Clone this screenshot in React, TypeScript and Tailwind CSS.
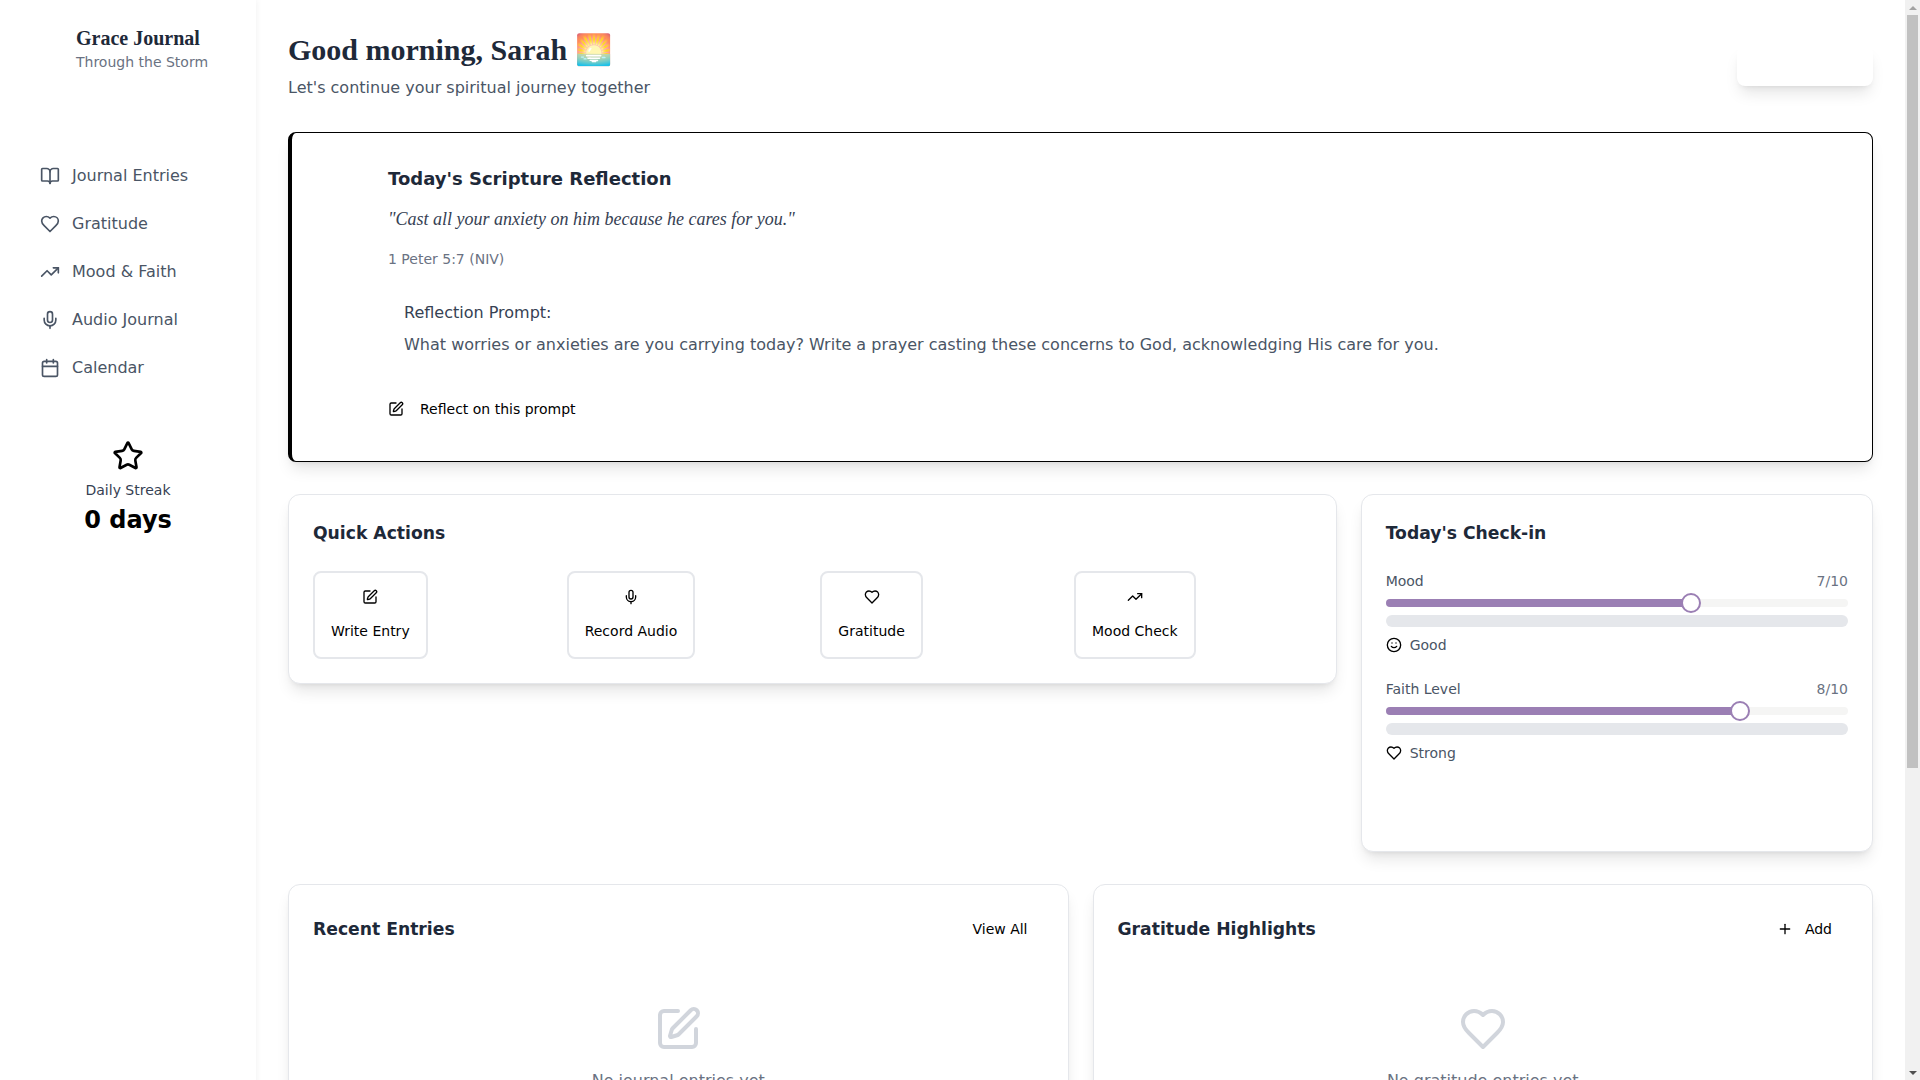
import * as Slider from "@radix-ui/react-slider";
import { BookOpen, Calendar, Mic, Plus, Smile, SquarePen, Star, TrendingUp } from "lucide-react";

// lucide's current heart is rounder than the one in the picture
function Heart({ className }: { className?: string }) {
  return (
    <svg viewBox="0 0 24 24" fill="none" stroke="currentColor" strokeWidth="2" strokeLinecap="round" strokeLinejoin="round" className={className}>
      <path d="M19 14c1.49-1.46 3-3.21 3-5.5A5.5 5.5 0 0 0 16.5 3c-1.76 0-3 .5-4.5 2-1.5-1.5-2.74-2-4.5-2A5.5 5.5 0 0 0 2 8.5c0 2.3 1.5 4.05 3 5.5l7 7Z" />
    </svg>
  );
}

const navItems = [
  { label: "Journal Entries", icon: BookOpen },
  { label: "Gratitude", icon: Heart },
  { label: "Mood & Faith", icon: TrendingUp },
  { label: "Audio Journal", icon: Mic },
  { label: "Calendar", icon: Calendar },
];

const quickActions = [
  { label: "Write Entry", icon: SquarePen },
  { label: "Record Audio", icon: Mic },
  { label: "Gratitude", icon: Heart },
  { label: "Mood Check", icon: TrendingUp },
];

type IconType = typeof Smile | typeof Heart;

function CheckInSlider({ label, value, note, icon: Icon }: { label: string; value: number; note: string; icon: IconType }) {
  return (
    <div>
      <div className="flex items-center justify-between mb-2 text-sm">
        <span className="text-gray-600">{label}</span>
        <span className="text-gray-500">{value}/10</span>
      </div>
      <Slider.Root className="relative flex h-2 w-full items-center" min={1} max={10} step={1} defaultValue={[value]}>
        <Slider.Track className="relative h-2 w-full grow overflow-hidden rounded-full bg-[#f5f5f4]">
          <Slider.Range className="absolute h-full bg-[#9b7fb4]" />
        </Slider.Track>
        <Slider.Thumb className="block h-5 w-5 rounded-full border-2 border-[#9b7fb4] bg-white" />
      </Slider.Root>
      <div className="mt-2 h-3 rounded-full bg-gray-200" />
      <div className="mt-2 flex items-center gap-2 text-sm text-gray-600">
        <Icon className="h-4 w-4 text-black" />
        <span>{note}</span>
      </div>
    </div>
  );
}

function EmptyState({ text, icon: Icon }: { text: string; icon: IconType }) {
  return (
    <div className="mt-[56px] flex flex-col items-center">
      <Icon className="mb-4 h-12 w-12 text-gray-300" />
      <p className="text-gray-500">{text}</p>
    </div>
  );
}

// the page's scrollbar as the picture shows it
function Scrollbar() {
  return (
    <div className="fixed right-0 top-0 flex h-screen w-[15px] flex-col items-center bg-[#f1f1f1]">
      <div className="flex h-[15px] items-center justify-center">
        <svg viewBox="0 0 8 4" className="h-1 w-2 fill-[#a3a3a3]">
          <path d="M4 0 8 4H0Z" />
        </svg>
      </div>
      <div className="h-[753px] w-[11px] bg-[#c1c1c1]" />
      <div className="mt-auto flex h-[15px] items-center justify-center">
        <svg viewBox="0 0 8 4" className="h-1 w-2 fill-[#505050]">
          <path d="M0 0H8L4 4Z" />
        </svg>
      </div>
    </div>
  );
}

export default function App() {
  return (
    <div className="flex min-h-screen bg-white pr-[15px] font-['DejaVu_Sans',sans-serif]">
      {/* Sidebar */}
      <aside className="w-64 shrink-0 bg-white shadow-[1px_0_6px_rgba(0,0,0,0.05)]">
        <div className="pl-[76px] pt-6">
          <h1 className="font-['Liberation_Serif',serif] text-xl font-bold leading-7 text-gray-800">Grace Journal</h1>
          <p className="text-sm text-gray-500">Through the Storm</p>
        </div>
        <nav className="mt-[84px] flex flex-col gap-2 px-6">
          {navItems.map(({ label, icon: Icon }) => (
            <a key={label} className="flex items-center gap-3 px-4 py-2 text-gray-600">
              <Icon className="h-5 w-5" />
              <span>{label}</span>
            </a>
          ))}
        </nav>
        <div className="mt-[52px] flex flex-col items-center">
          <Star className="mb-2 h-8 w-8 text-black" />
          <p className="text-sm text-gray-700">Daily Streak</p>
          <p className="mt-1 text-2xl font-bold text-black">0 days</p>
        </div>
      </aside>

      {/* Main */}
      <main className="min-w-0 flex-1 p-8">
        <header className="mb-8 flex items-center justify-between">
          <div>
            <h2 className="mb-2 font-['Liberation_Serif',serif] text-3xl font-bold text-gray-800">
              Good morning, Sarah 🌅
            </h2>
            <p className="text-gray-600">Let's continue your spiritual journey together</p>
          </div>
          <button className="h-10 w-[136px] rounded-lg bg-white shadow-lg" />
        </header>

        {/* Scripture */}
        <section className="mb-8 flex gap-4 rounded-lg border border-l-4 border-black bg-white p-8 shadow-lg">
          <div className="h-12 w-12 shrink-0" />
          <div className="flex-1">
            <h3 className="mb-3 text-lg font-semibold text-gray-800">Today's Scripture Reflection</h3>
            <p className="mb-4 font-['Liberation_Serif',serif] text-lg italic text-gray-700">
              "Cast all your anxiety on him because he cares for you."
            </p>
            <p className="mb-4 text-sm text-gray-500">1 Peter 5:7 (NIV)</p>
            <div className="p-4">
              <p className="mb-2 text-gray-700">Reflection Prompt:</p>
              <p className="text-gray-600">
                What worries or anxieties are you carrying today? Write a prayer casting these concerns to God, acknowledging His care for you.
              </p>
            </div>
            <button className="mt-4 flex h-10 items-center gap-4 text-sm text-black">
              <SquarePen className="h-4 w-4" />
              Reflect on this prompt
            </button>
          </div>
        </section>

        <div className="mb-8 grid grid-cols-3 items-start gap-6">
          <section className="col-span-2 rounded-xl border border-gray-200 bg-white p-6 shadow-lg">
            <h3 className="mb-6 text-[17.2px] font-semibold leading-7 text-gray-800">Quick Actions</h3>
            <div className="grid grid-cols-4 gap-4">
              {quickActions.map(({ label, icon: Icon }) => (
                <button
                  key={label}
                  className="flex flex-col items-center gap-4 justify-self-start rounded-lg border-2 border-gray-200 bg-white p-4 text-sm text-black"
                >
                  <Icon className="h-4 w-4" />
                  {label}
                </button>
              ))}
            </div>
          </section>

          <section className="min-h-[358px] rounded-xl border border-gray-200 bg-white p-6 shadow-lg">
            <h3 className="mb-6 text-[17.2px] font-semibold leading-7 text-gray-800">Today's Check-in</h3>
            <div className="flex flex-col gap-6">
              <CheckInSlider label="Mood" value={7} note="Good" icon={Smile} />
              <CheckInSlider label="Faith Level" value={8} note="Strong" icon={Heart} />
            </div>
          </section>
        </div>

        <div className="grid grid-cols-2 gap-6">
          <section className="h-[589px] rounded-xl border border-gray-200 bg-white p-6 shadow-lg">
            <div className="flex items-center justify-between">
              <h3 className="text-[17.2px] font-semibold leading-7 text-gray-800">Recent Entries</h3>
              <button className="h-10 px-4 text-sm text-black">View All</button>
            </div>
            <EmptyState text="No journal entries yet" icon={SquarePen} />
          </section>
          <section className="h-[589px] rounded-xl border border-gray-200 bg-white p-6 shadow-lg">
            <div className="flex items-center justify-between">
              <h3 className="text-[17.2px] font-semibold leading-7 text-gray-800">Gratitude Highlights</h3>
              <button className="flex h-10 items-center gap-3 px-4 text-sm text-black">
                <Plus className="h-4 w-4" />
                Add
              </button>
            </div>
            <EmptyState text="No gratitude entries yet" icon={Heart} />
          </section>
        </div>
      </main>
      <Scrollbar />
    </div>
  );
}
